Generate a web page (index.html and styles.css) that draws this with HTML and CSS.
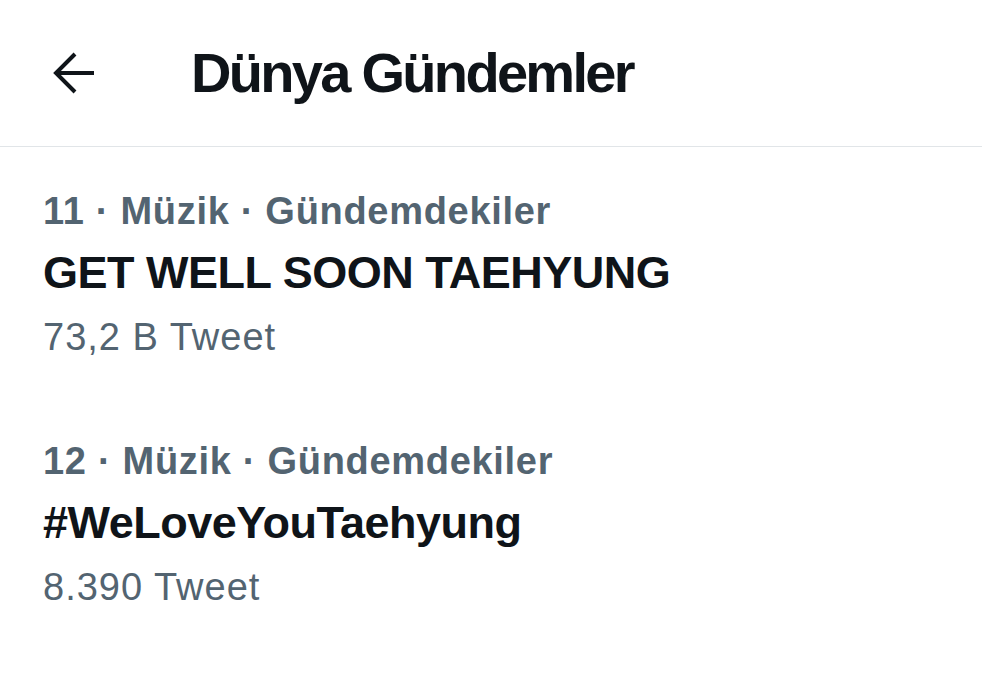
FILE: index.html
```html
<!DOCTYPE html>
<html lang="tr">
<head>
<meta charset="utf-8">
<title>Dünya Gündemler</title>
<link rel="stylesheet" href="styles.css">
</head>
<body>
<header class="topbar">
  <svg class="back" viewBox="0 0 42 42" width="42" height="42" aria-hidden="true">
    <path d="M22 2 L3 21 L22 40 M3 21 H41" fill="none" stroke="#0f1419" stroke-width="4"/>
  </svg>
  <h1 class="title">Dünya Gündemler</h1>
</header>
<main class="list">
  <section class="trend">
    <div class="meta">11 · Müzik · Gündemdekiler</div>
    <div class="name">GET WELL SOON TAEHYUNG</div>
    <div class="count">73,2 B Tweet</div>
  </section>
  <section class="trend">
    <div class="meta">12 · Müzik · Gündemdekiler</div>
    <div class="name">#WeLoveYouTaehyung</div>
    <div class="count">8.390 Tweet</div>
  </section>
</main>
</body>
</html>
```
FILE: styles.css
```css
html, body {
  margin: 0;
  padding: 0;
  background: #ffffff;
}
body {
  font-family: "Liberation Sans", Arial, sans-serif;
  color: #0f1419;
}
.topbar {
  height: 146px;
  display: flex;
  align-items: center;
  padding-left: 53px;
  gap: 96px;
  border-bottom: 1px solid #e1e5e8;
}
.back {
  display: block;
  flex: none;
}
.title {
  margin: 0;
  font-size: 56px;
  line-height: 56px;
  font-weight: 700;
  letter-spacing: -2.7px;
}
.list {
  padding-left: 43px;
}
.trend {
  padding: 39px 0 36px;
}
.meta {
  font-size: 38px;
  line-height: 50px;
  font-weight: 700;
  color: #536471;
  letter-spacing: 0.7px;
}
.name {
  margin-top: 9px;
  font-size: 45px;
  line-height: 56px;
  font-weight: 700;
  color: #0f1419;
  letter-spacing: -0.5px;
}
.count {
  margin-top: 12px;
  font-size: 38px;
  line-height: 48px;
  color: #536471;
  letter-spacing: 1px;
}
```
